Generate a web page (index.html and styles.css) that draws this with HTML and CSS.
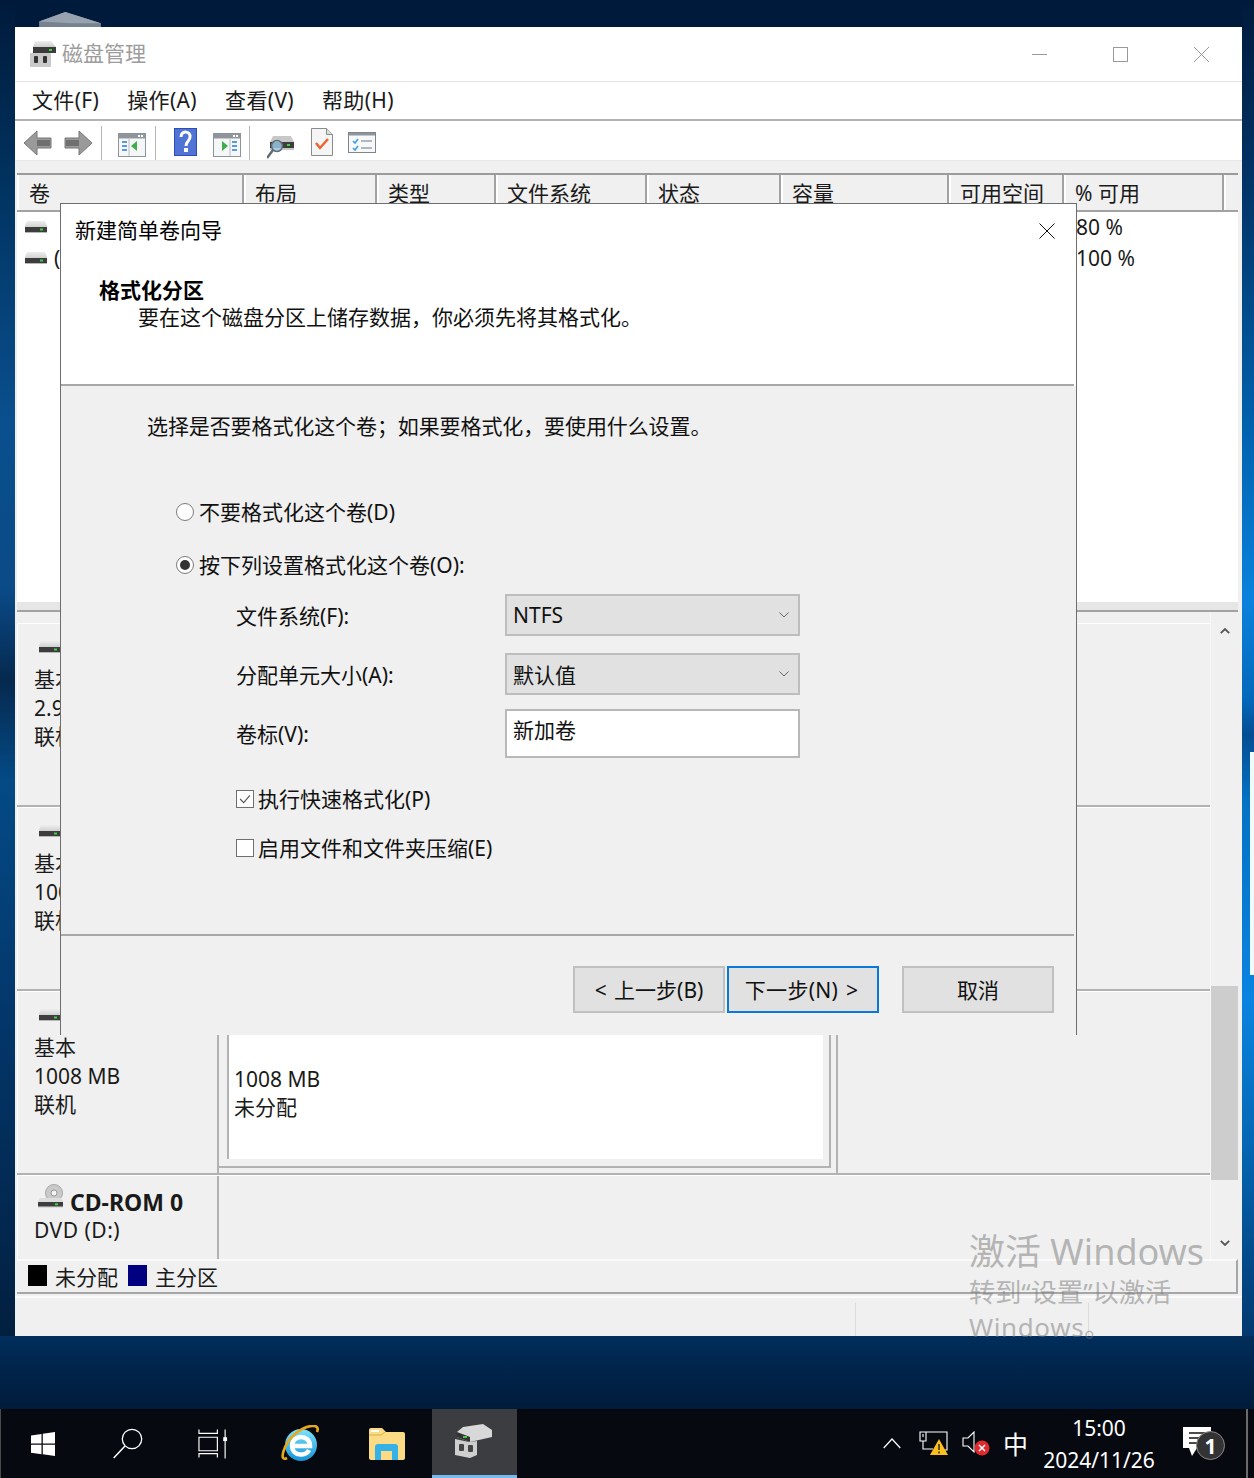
FILE: index.html
```html
<!DOCTYPE html>
<html lang="zh-CN">
<head>
<meta charset="utf-8">
<title>磁盘管理</title>
<link rel="stylesheet" href="styles.css">
</head>
<body>
<svg class="defs" width="0" height="0" aria-hidden="true">
  <defs>
    <linearGradient id="dtop" x1="0" y1="0" x2="0" y2="1"><stop offset="0" stop-color="#eeeeee"/><stop offset="1" stop-color="#b4b4b4"/></linearGradient>
    <linearGradient id="ieb" x1="0" y1="0" x2="0" y2="1"><stop offset="0" stop-color="#7fe3fb"/><stop offset="1" stop-color="#1594d8"/></linearGradient>
    <symbol id="disk" viewBox="0 0 24 14">
      <path d="M3 1h18l2 5v7H1V6z" fill="url(#dtop)"/>
      <rect x="1" y="7" width="22" height="5" fill="#3d3d3d"/>
      <rect x="16" y="8.5" width="3" height="2" fill="#3fd13f"/>
    </symbol>
    <symbol id="win-list" viewBox="0 0 28 24">
      <rect x=".5" y=".5" width="27" height="23" fill="#f4f6f8" stroke="#8d9499"/>
      <rect x="1" y="1" width="26" height="4" fill="#8f969b"/>
      <rect x="20" y="2" width="2" height="2" fill="#fff"/><rect x="23" y="2" width="2" height="2" fill="#fff"/>
      <rect x="1" y="5" width="26" height="1" fill="#c4cace"/>
    </symbol>
  </defs>
</svg>

<main class="desktop">
  <svg class="peek-icon" viewBox="0 0 66 16" aria-hidden="true"><path d="M0 10 28 0l38 12v4H0z" fill="#76828f"/><path d="M0 10 28 0l38 12-30 0z" fill="#98a3af"/></svg>
  <div class="peek-white"></div>

  <section class="window">
    <header class="titlebar">
      <svg class="app-icon" viewBox="0 0 28 28" aria-hidden="true">
        <path d="M6 1h16l5 6v5H4V7z" fill="url(#dtop)"/>
        <rect x="4" y="7" width="23" height="6" fill="#3b3b3b"/>
        <rect x="20" y="9" width="3" height="2" fill="#3fd13f"/>
        <rect x="1" y="13" width="21" height="14" rx="1" fill="#c9c9c9"/>
        <rect x="5" y="16" width="4" height="7" rx="1" fill="#333"/><rect x="14" y="16" width="4" height="7" rx="1" fill="#333"/>
      </svg>
      <span class="title-text">磁盘管理</span>
      <div class="win-controls">
        <svg class="ctl" viewBox="0 0 15 15" aria-hidden="true"><path d="M0 7.5h15" stroke="#999" fill="none"/></svg>
        <svg class="ctl" viewBox="0 0 15 15" aria-hidden="true"><rect x=".5" y=".5" width="14" height="14" stroke="#999" fill="none"/></svg>
        <svg class="ctl" viewBox="0 0 15 15" aria-hidden="true"><path d="M0 0l15 15M15 0 0 15" stroke="#999" fill="none"/></svg>
      </div>
    </header>

    <nav class="menubar">
      <span>文件(F)</span><span>操作(A)</span><span>查看(V)</span><span>帮助(H)</span>
    </nav>

    <div class="toolbar">
      <svg class="tb tb-arrow" viewBox="0 0 29 26" aria-hidden="true"><path d="M14 1 1 13l13 12v-7h14V8H14z" fill="#9a9a9a" stroke="#777"/><rect x="14" y="10" width="13" height="6" fill="#6f6f6f"/></svg>
      <svg class="tb tb-arrow gap12" viewBox="0 0 29 26" aria-hidden="true"><path d="M15 1l13 12-13 12v-7H1V8h14z" fill="#9a9a9a" stroke="#777"/><rect x="2" y="10" width="13" height="6" fill="#6f6f6f"/></svg>
      <i class="tb-sep sep-a"></i>
      <svg class="tb tb-win m-a" viewBox="0 0 28 24" aria-hidden="true"><use href="#win-list"/><path d="M4 9h5M4 13h5M4 17h5" stroke="#5b9bd5" stroke-width="2"/><path d="M19 8v10l-6-5z" fill="#3fae49"/><path d="M11 6v17" stroke="#b8bec2"/></svg>
      <i class="tb-sep sep-b"></i>
      <svg class="tb tb-help m-b" viewBox="0 0 23 28" aria-hidden="true"><rect width="23" height="28" fill="#2d4db5"/><rect x="1" y="1" width="21" height="26" fill="#4f74d6"/><path d="M7 9c0-7 10-6 9 0 0 4-4 4-4 9" fill="none" stroke="#fff" stroke-width="3"/><rect x="10" y="20" width="4" height="4" fill="#fff"/></svg>
      <svg class="tb tb-win m-c" viewBox="0 0 28 24" aria-hidden="true"><use href="#win-list"/><path d="M19 9h5M19 13h5M19 17h5" stroke="#5b9bd5" stroke-width="2"/><path d="M9 8v10l6-5z" fill="#3fae49"/><path d="M17 6v17" stroke="#b8bec2"/></svg>
      <i class="tb-sep sep-c"></i>
      <svg class="tb tb-scan m-d" viewBox="0 0 28 28" aria-hidden="true"><path d="M6 5h18l3 6v8H3v-8z" fill="#c8c8c8"/><rect x="3" y="11" width="24" height="6" fill="#3d3d3d"/><rect x="20" y="13" width="3" height="2" fill="#3fd13f"/><circle cx="10" cy="15" r="5.5" fill="#9fd0e8" fill-opacity=".8" stroke="#5f6b75" stroke-width="1.5"/><path d="M6 19 0 27" stroke="#5f6b75" stroke-width="2.5"/></svg>
      <svg class="tb tb-doc m-e" viewBox="0 0 22 28" aria-hidden="true"><path d="M.5.5h15l6 6v21H.5z" fill="#f5f5f5" stroke="#8a8a8a"/><path d="M15.5.5v6h6" fill="#ddd" stroke="#8a8a8a"/><path d="M5 15l4 5 8-9" fill="none" stroke="#f0602a" stroke-width="2.4"/></svg>
      <svg class="tb tb-chk m-f" viewBox="0 0 28 21" aria-hidden="true"><rect x=".5" y=".5" width="27" height="20" fill="#f7f8f9" stroke="#7f868b"/><rect x="1" y="1" width="26" height="2.5" fill="#8f969b"/><path d="M5 9l2 2 3-4M5 16l2 2 3-4" fill="none" stroke="#3f9fe0" stroke-width="1.6"/><path d="M13 9h11M13 16h11" stroke="#9aa0a5" stroke-width="1.4"/></svg>
    </div>

    <div class="workspace">
      <div class="volume-list">
        <div class="vl-grid vl-head">
          <span>卷</span><span>布局</span><span>类型</span><span>文件系统</span><span>状态</span><span>容量</span><span>可用空间</span><span>% 可用</span><span></span>
        </div>
        <div class="vl-body">
          <div class="vl-grid vl-row"><svg class="disk-s" aria-hidden="true"><use href="#disk"/></svg><b></b><b></b><b></b><b></b><b></b><b></b><span class="pct">80 %</span></div>
          <div class="vl-grid vl-row"><span class="vol-cell"><svg class="disk-s" aria-hidden="true"><use href="#disk"/></svg><em>(</em></span><b></b><b></b><b></b><b></b><b></b><b></b><span class="pct">100 %</span></div>
        </div>
      </div>

      <div class="disks">
        <div class="disk-rows">
          <div class="disk-row">
            <div class="disk-info"><svg class="disk-m" aria-hidden="true"><use href="#disk"/></svg><p>基本</p><p>2.9</p><p>联机</p></div>
            <div class="disk-map"></div>
          </div>
          <div class="disk-row">
            <div class="disk-info"><svg class="disk-m" aria-hidden="true"><use href="#disk"/></svg><p>基本</p><p>100</p><p>联机</p></div>
            <div class="disk-map"></div>
          </div>
          <div class="disk-row">
            <div class="disk-info"><svg class="disk-m" aria-hidden="true"><use href="#disk"/></svg><p>基本</p><p>1008 MB</p><p>联机</p></div>
            <div class="disk-map">
              <div class="part-outer"><div class="part-inner"><div class="part-white"><p>1008 MB</p><p>未分配</p></div></div></div>
            </div>
          </div>
          <div class="disk-row cd">
            <div class="disk-info">
              <div class="cd-head">
                <svg class="cd-icon" viewBox="0 0 27 26" aria-hidden="true"><circle cx="17" cy="9" r="8.5" fill="#c9c9c9" stroke="#a8a8a8"/><circle cx="17" cy="9" r="3" fill="#f4f4f4" stroke="#999"/><path d="M3 14h21l2 3v7H1v-7z" fill="#ddd"/><rect x="1" y="18" width="25" height="4.5" fill="#3d3d3d"/><rect x="18" y="19.3" width="3" height="2" fill="#3fd13f"/></svg>
                <strong>CD-ROM 0</strong>
              </div>
              <p>DVD (D:)</p>
            </div>
            <div class="disk-map"></div>
          </div>
        </div>
        <div class="scrollbar">
          <svg class="sb-arrow" viewBox="0 0 10 6" aria-hidden="true"><path d="M.8 5.2 5 1l4.2 4.2" fill="none" stroke="#555" stroke-width="1.8"/></svg>
          <div class="sb-thumb"></div>
          <svg class="sb-arrow down" viewBox="0 0 10 6" aria-hidden="true"><path d="M.8.8 5 5 9.200.8" fill="none" stroke="#555" stroke-width="1.8"/></svg>
        </div>
      </div>

      <div class="legend">
        <i class="swatch black"></i><span>未分配</span>
        <i class="swatch navy"></i><span>主分区</span>
      </div>
    </div>

    <footer class="statusbar"><i></i><i></i></footer>
  </section>

  <section class="dialog">
    <div class="dlg-head">
      <div class="dlg-title"><span>新建简单卷向导</span>
        <svg class="dlg-close" viewBox="0 0 16 16" aria-hidden="true"><path d="M.5.500l15 15M15.500.500l-15 15" stroke="#111" fill="none"/></svg>
      </div>
      <h1>格式化分区</h1>
      <p class="dlg-sub">要在这个磁盘分区上储存数据，你必须先将其格式化。</p>
    </div>
    <div class="dlg-body">
      <p class="intro">选择是否要格式化这个卷；如果要格式化，要使用什么设置。</p>
      <div class="opt opt-1"><i class="radio"></i><span>不要格式化这个卷(D)</span></div>
      <div class="opt opt-2"><i class="radio on"></i><span>按下列设置格式化这个卷(O):</span></div>
      <div class="field f1"><label>文件系统(F):</label><div class="combo"><span>NTFS</span><svg viewBox="0 0 10 6" aria-hidden="true"><path d="M.5.500 5 5 9.500.500" fill="none" stroke="#666"/></svg></div></div>
      <div class="field f2"><label>分配单元大小(A):</label><div class="combo"><span>默认值</span><svg viewBox="0 0 10 6" aria-hidden="true"><path d="M.5.500 5 5 9.500.500" fill="none" stroke="#666"/></svg></div></div>
      <div class="field f3"><label>卷标(V):</label><div class="textbox">新加卷</div></div>
      <div class="chk c1"><i class="box"><svg viewBox="0 0 18 18" aria-hidden="true"><path d="M3.500 9l4 4 7-8" fill="none" stroke="#555" stroke-width="1.300"/></svg></i><span>执行快速格式化(P)</span></div>
      <div class="chk c2"><i class="box"></i><span>启用文件和文件夹压缩(E)</span></div>
    </div>
    <div class="dlg-foot">
      <button class="btn">&lt; 上一步(B)</button>
      <button class="btn primary">下一步(N) &gt;</button>
      <button class="btn cancel">取消</button>
    </div>
  </section>

  <aside class="watermark">
    <p class="wm-1">激活 Windows</p>
    <p class="wm-2">转到“设置”以激活</p>
    <p class="wm-3">Windows。</p>
  </aside>

  <footer class="taskbar">
    <div class="tk"><svg class="ic-start" viewBox="0 0 24 24" aria-hidden="true"><path d="M0 3.400 10.500 2v9.500H0zM11.800 1.800 24 0v11.500H11.800zM0 12.800h10.500v9.400L0 20.800zM11.800 12.800H24V24l-12.200-1.700z" fill="#fff"/></svg></div>
    <div class="tk"><svg class="ic-search" viewBox="0 0 30 31" aria-hidden="true"><circle cx="19" cy="11" r="9.700" fill="none" stroke="#fff" stroke-width="1.300"/><path d="M12 18 .7 30" stroke="#fff" stroke-width="1.500"/></svg></div>
    <div class="tk"><svg class="ic-tv" viewBox="0 0 32 30" aria-hidden="true"><g fill="none" stroke="#fff" stroke-width="1.200"><path d="M1 0v4h19V0M1 8h19v14H1zM1 29v-4h19v4M28 0v30"/></g><rect x="26" y="8" width="4" height="4" fill="#fff"/></svg></div>
    <div class="tk"><svg class="ic-ie" viewBox="0 0 38 38" aria-hidden="true"><circle cx="20" cy="20" r="16" fill="url(#ieb)"/><path d="M11 21h18c0-12-18-12-18 0 0 10 14 11 17 4" fill="none" stroke="#fff" stroke-width="4.500"/><path d="M6 33C-3 38 3 18 14 9 26-1 40-2 36 7" fill="none" stroke="#e6a91e" stroke-width="2.600"/></svg></div>
    <div class="tk"><svg class="ic-folder" viewBox="0 0 37 32" aria-hidden="true"><path d="M1 2a2 2 0 0 1 2-2h11l4 4h17a2 2 0 0 1 2 2v24a2 2 0 0 1-2 2H3a2 2 0 0 1-2-2z" fill="#fbdc84"/><path d="M1 7h12l4-3" fill="none" stroke="#d9b04e"/><rect x="3" y="2" width="8" height="2" fill="#fff"/><path d="M7 32V19a3 3 0 0 1 3-3h17a3 3 0 0 1 3 3v13h-6v-9H13v9z" fill="#34b1e6"/></svg></div>
    <div class="tk active"><svg class="ic-dm" viewBox="0 0 38 34" aria-hidden="true"><path d="M9 3 29 0l9 6v7L16 18 3 13V8z" fill="#d8d8d8"/><path d="M3 8l13 5v5L3 13z" fill="#333"/><rect x="9" y="12" width="4" height="2" fill="#3fd13f"/><path d="M1 15l14 3 8-1v14l-7 3-15-3z" fill="#cfcfcf"/><rect x="5" y="20" width="5" height="7" rx="1" fill="#444"/><rect x="14" y="21" width="5" height="7" rx="1" fill="#444"/></svg></div>
    <div class="tray">
      <svg class="ic-chev" viewBox="0 0 18 11" aria-hidden="true"><path d="M.7 10 9 1l8.300 9" fill="none" stroke="#fff" stroke-width="1.200"/></svg>
      <svg class="ic-net" viewBox="0 0 29 25" aria-hidden="true"><g fill="none" stroke="#fff" stroke-width="1.100"><path d="M1 1h27v18H21M1 1h6v9H1zM4 10v8h10M4 3v3"/></g><path d="M20 8l9 16H11z" fill="#fcbf1e"/><path d="M20 13v6M20 20.500v2" stroke="#222" stroke-width="1.400"/></svg>
      <svg class="ic-vol" viewBox="0 0 28 25" aria-hidden="true"><path d="M1 7h5l6-6v20l-6-6H1z" fill="none" stroke="#fff" stroke-width="1.100"/><circle cx="20" cy="17" r="7.500" fill="#dc2a2f"/><path d="M17 14l6 6M23 14l-6 6" stroke="#fff" stroke-width="1.500"/></svg>
      <span class="ime">中</span>
      <div class="clock"><span>15:00</span><span>2024/11/26</span></div>
      <div class="notif">
        <svg viewBox="0 0 29 29" aria-hidden="true"><path d="M0 0h28v21H14l-5 8-3-8H0z" fill="#fff"/><path d="M6 6h16M6 11h16M6 16h16" stroke="#111" stroke-width="1.500"/></svg>
        <span class="badge">1</span>
      </div>
      <i class="show-desktop"></i>
    </div>
  </footer>
</main>
</body>
</html>
```
FILE: styles.css
```css
* { box-sizing: border-box; }
html, body { margin: 0; padding: 0; }
body {
  width: 1254px;
  height: 1478px;
  overflow: hidden;
  font-family: "Noto Sans", "Noto Sans CJK SC", sans-serif;
  font-size: 21px;
  color: #1a1a1a;
}
p, h1 { margin: 0; }
i, em { font-style: normal; }
.defs { position: absolute; }

.desktop {
  position: relative;
  width: 1254px;
  height: 1478px;
  background:
    linear-gradient(180deg, #001a3b 0, #013563 200px, #0a4f8e 420px, #0a4a87 590px, #06294f 680px, #044a85 780px, #03386c 1000px, #021f40 1336px) left top / 15px 1336px no-repeat,
    linear-gradient(180deg, #001a3b 0, #013a70 220px, #0060ac 420px, #0a82dd 600px, #0468ba 700px, #054d92 735px, #0472c4 800px, #0a84e0 1000px, #0465b2 1150px, #02386e 1336px) right top / 12px 1336px no-repeat,
    linear-gradient(180deg, #001a3b 0, #001a3b 27px, #012e5c 1336px, #01234a 1372px, #001b3b 1409px);
}
.peek-icon { position: absolute; left: 37px; top: 12px; width: 66px; height: 15px; }
.peek-white { position: absolute; left: 1250px; top: 752px; width: 4px; height: 223px; background: #eefcff; }

/* main window */
.window {
  position: absolute;
  left: 15px;
  top: 27px;
  width: 1227px;
  height: 1309px;
  background: #f0f0f0;
  display: flex;
  flex-direction: column;
}
.titlebar {
  height: 55px;
  flex: none;
  background: #fff;
  border-bottom: 1px solid #e3e3e3;
  display: flex;
  align-items: center;
  padding-left: 15px;
}
.app-icon { width: 28px; height: 28px; margin-left: -1px; }
.title-text { margin-left: 5px; color: #9c9c9c; padding-bottom: 4px; }
.win-controls { margin-left: auto; display: flex; gap: 66px; padding-right: 33px; }
.ctl { width: 15px; height: 15px; display: block; }

.menubar {
  height: 39px;
  flex: none;
  background: #fff;
  border-bottom: 2px solid #b4b4b4;
  display: flex;
  gap: 28px;
  align-items: center;
  padding: 0 0 3px 17px;
  letter-spacing: .35px;
}
.toolbar {
  height: 40px;
  flex: none;
  background: #fff;
  display: flex;
  align-items: center;
  padding: 4px 0 0 8px;
  border-bottom: 1px solid #e9e9e9;
}
.tb { display: block; flex: none; }
.tb-arrow { width: 29px; height: 26px; }
.gap12 { margin-left: 12px; }
.tb-sep { width: 1px; height: 34px; background: #b5b5b5; flex: none; }
.sep-a { margin-left: 8px; }
.sep-b { margin-left: 9px; }
.sep-c { margin-left: 8px; }
.tb-win { width: 28px; height: 24px; margin-top: 4px; }
.m-a { margin-left: 16px; }
.tb-help { width: 23px; height: 28px; margin-left: 18px; margin-top: -2px; }
.m-c { margin-left: 16px; }
.tb-scan { width: 28px; height: 28px; margin-left: 17px; margin-top: 4px; }
.tb-doc { width: 22px; height: 28px; margin-left: 16px; margin-top: -2px; }
.tb-chk { width: 28px; height: 21px; margin-left: 15px; }

.workspace {
  flex: none;
  height: 1135px;
  display: flex;
  flex-direction: column;
  padding: 12px 4px 0 2px;
}
.volume-list {
  height: 439px;
  flex: none;
  border-top: 2px solid #9b9b9b;
  background: #fff;
  display: flex;
  flex-direction: column;
  border-bottom: 2px solid #a2a2a2;
}
.vl-grid {
  display: grid;
  grid-template-columns: 227px 133px 119px 151px 134px 168px 115px 160px 1fr;
}
.vl-head {
  height: 37px;
  flex: none;
  background: #f0f0f0;
  border-bottom: 2px solid #a2a2a2;
}
.vl-head span {
  padding-left: 9px;
  line-height: 36px;
  border-right: 2px solid #a2a2a2;
  border-left: 2px solid #fff;
  height: 35px;
  white-space: nowrap;
  overflow: hidden;
}
.vl-head span:first-child { padding-left: 10px; }
.vl-head span:last-child { border-right: 0; }
.vl-body { flex: 1; border-bottom: 8px solid #e6e6e6; }
.vl-row { height: 31px; align-items: center; }
.vl-row:first-child { height: 30px; }
.vl-row b { display: block; }
.disk-s { width: 24px; height: 14px; margin-left: 7px; display: block; }
.vol-cell { display: flex; align-items: center; }
.vol-cell em { margin-left: 6px; }
.pct { padding-left: 12px; }

.disks {
  height: 647px;
  flex: none;
  display: flex;
}
.disk-rows { flex: 1; min-width: 0; padding-top: 11px; }
.disk-row {
  height: 184px;
  display: flex;
  border-bottom: 2px solid #b2b2b2;
  border-top: 1px solid #fff;
}
.disk-row.cd { height: 84px; border-bottom: 0; }
.disk-info {
  width: 200px;
  flex: none;
  padding: 16px 0 0 16px;
  line-height: 28.500px;
  border-left: 1px solid #fff;
}
.disk-info p { white-space: nowrap; }
.disk-m { width: 24px; height: 14px; display: block; margin: 0 0 11px 4px; }
.disk-map {
  flex: 1;
  min-width: 0;
  border-left: 2px solid #b2b2b2;
  position: relative;
  padding-top: 7px;
}
.part-outer {
  width: 619px;
  height: 176px;
  border-right: 2px solid #b2b2b2;
  border-bottom: 2px solid #b2b2b2;
  padding: 0 5px 5px 0;
}
.part-inner {
  height: 100%;
  border-right: 2px solid #b2b2b2;
  border-bottom: 2px solid #b2b2b2;
  padding: 0 6px 7px 8px;
}
.part-white {
  height: 100%;
  background: #fff;
  border-left: 2px solid #b2b2b2;
  padding: 66px 0 0 5px;
  line-height: 28px;
}
.cd-head { display: flex; align-items: center; margin: -11px 0 0 3px; }
.cd-icon { width: 27px; height: 26px; margin: -6px 6px 0 0; }
.cd-head strong { font-size: 23px; font-weight: 700; line-height: 34px; margin-top: 4px; white-space: nowrap; }
.cd .disk-info p { margin-top: -3px; letter-spacing: .5px; }

.scrollbar {
  width: 28px;
  flex: none;
  display: flex;
  flex-direction: column;
  align-items: center;
  background: #f0f0f0;
  border-left: 1px solid #f7f7f7;
}
.sb-arrow { width: 10px; height: 6px; margin-top: 16px; flex: none; }
.sb-thumb { width: 100%; height: 194px; background: #cdcdcd; margin-top: 352px; flex: none; }
.sb-arrow.down { margin-top: 60px; }

.legend {
  height: 35px;
  margin-bottom: 2px;
  flex: none;
  border-top: 2px solid #fafafa;
  border-bottom: 2px solid #a6a6a6;
  border-right: 2px solid #a6a6a6;
  display: flex;
  align-items: center;
  padding-left: 11px;
}
.swatch { width: 19px; height: 21px; display: block; margin-bottom: 2px; }
.black { background: #000; }
.navy { background: #000080; margin-left: 10px; }
.legend span { margin-left: 8px; padding-bottom: 2px; }

.statusbar {
  flex: none;
  height: 40px;
  display: flex;
  padding: 5px 0 0 840px;
  gap: 232px;
  border-top: 2px solid #fafafa;
}
.statusbar i { width: 1px; background: #dcdcdc; height: 100%; display: block; }

/* dialog */
.dialog {
  position: absolute;
  left: 60px;
  top: 203px;
  width: 1017px;
  height: 832px;
  background: #f0f0f0;
  border: 1px solid #6e6e6e;
  border-bottom: 0;
  display: flex;
  flex-direction: column;
  color: #111;
}
.dlg-head {
  height: 182px;
  background: #fff;
  flex: none;
  border-bottom: 2px solid #a8a8a8;
  margin-right: 2px;
  box-shadow: 2px 0 0 #fff;
}
.dlg-title {
  display: flex;
  align-items: center;
  justify-content: space-between;
  padding: 8px 19px 0 14px;
  height: 42px;
  color: #000;
}
.dlg-close { width: 16px; height: 16px; margin-top: 4px; }
.dlg-head h1 { font-size: 21px; font-weight: 700; line-height: 30px; margin: 29px 0 0 38px; color: #000; }
.dlg-sub { line-height: 30px; margin: -3px 0 0 77px; }
.dlg-body { flex: 1; padding-top: 25px; min-height: 0; }
.intro { line-height: 30px; margin-left: 86px; letter-spacing: -.1px; }
.opt { display: flex; align-items: center; height: 30px; margin-left: 115px; gap: 5px; }
.opt span { padding-bottom: 2px; }
.opt-1 { margin-top: 56px; }
.opt-2 { margin-top: 23px; }
.radio {
  width: 18px; height: 18px;
  border-radius: 50%;
  border: 1px solid #7b7b7b;
  background: #fff;
  display: grid;
  place-items: center;
  flex: none;
}
.radio.on::after { content: ""; width: 10px; height: 10px; border-radius: 50%; background: #333; }
.field { display: flex; align-items: center; margin-left: 175px; }
.field label { width: 269px; flex: none; padding-bottom: 1px; }
.f1 { margin-top: 14px; }
.f2 { margin-top: 17px; }
.f3 { margin-top: 14px; }
.combo {
  width: 295px;
  height: 42px;
  background: #e1e1e1;
  border: 2px solid #bdbdbd;
  display: flex;
  align-items: center;
  justify-content: space-between;
  padding: 0 9px 0 6px;
}
.combo svg { width: 10px; height: 6px; }
.textbox {
  width: 295px;
  height: 49px;
  background: #fff;
  border: 2px solid #b8b8b8;
  padding: 0 6px;
  line-height: 38px;
}
.chk { display: flex; align-items: center; height: 30px; margin-left: 175px; gap: 4px; }
.chk span { padding-bottom: 2px; }
.c1 { margin-top: 26px; }
.c2 { margin-top: 19px; }
.box { width: 18px; height: 18px; background: #fff; border: 1px solid #6f6f6f; display: block; flex: none; }
.box svg { display: block; width: 16px; height: 16px; }
.dlg-foot {
  height: 101px;
  flex: none;
  border-top: 2px solid #a8a8a8;
  padding: 30px 20px 0 0;
  margin-right: 2px;
  display: flex;
  justify-content: flex-end;
  align-items: flex-start;
  gap: 2px;
}
.btn {
  width: 152px;
  height: 47px;
  font: inherit;
  word-spacing: 2px;
  color: #111;
  background: #e1e1e1;
  border: 2px solid #c0c0c0;
  padding: 0 0 2px;
}
.btn.primary { border-color: #0a78d7; letter-spacing: .3px; padding-right: 3px; }
.btn.cancel { margin-left: 21px; }

/* watermark */
.watermark { position: absolute; left: 969px; top: 1227px; color: rgba(120,120,120,.52); }
.wm-1 { font-size: 36px; line-height: 50px; white-space: nowrap; }
.wm-2 { font-size: 26.200px; line-height: 36px; margin-top: -3px; white-space: nowrap; }
.wm-3 { font-size: 26px; line-height: 35px; letter-spacing: .6px; white-space: nowrap; }

/* taskbar */
.taskbar {
  position: absolute;
  left: 0;
  top: 1409px;
  width: 1254px;
  height: 69px;
  background: #06090f;
  display: flex;
  border-left: 1px solid #4a4a4a;
  color: #fff;
}
.tk { width: 86px; flex: none; display: grid; place-items: center; }
.tk svg { display: block; }
.tk.active { background: #3b3d40; border-bottom: 3px solid #76b9ed; margin-left: 1px; width: 85px; }
.ic-start { width: 24px; height: 24px; margin-right: 3px; margin-top: 1px; }
.ic-search { width: 30px; height: 31px; margin-right: 4px; }
.ic-tv { width: 31px; height: 30px; margin-left: -6px; }
.ic-ie { width: 38px; height: 38px; margin-right: 4px; }
.ic-folder { width: 37px; height: 32px; margin-right: 4px; }
.ic-dm { width: 38px; height: 34px; margin: -2px 4px 0 0; }
.tray { flex: 1; position: relative; display: flex; align-items: center; padding-left: 366px; }
.ic-chev { width: 18px; height: 11px; flex: none; }
.ic-net { width: 29px; height: 25px; margin-left: 18px; flex: none; }
.ic-vol { width: 28px; height: 25px; margin-left: 14px; flex: none; }
.ime { font-size: 25px; margin-left: 13px; flex: none; line-height: 30px; }
.clock {
  width: 130px;
  margin-left: 6px;
  flex: none;
  display: flex;
  flex-direction: column;
  align-items: center;
  line-height: 32px;
  font-size: 21px;
  white-space: nowrap;
}
.notif { position: relative; width: 44px; height: 34px; margin-left: 19px; flex: none; }
.notif svg { position: absolute; left: 0; top: 0; width: 29px; height: 29px; }
.badge {
  position: absolute;
  left: 13px;
  top: 4px;
  width: 29px;
  height: 29px;
  border-radius: 50%;
  background: #333;
  border: 1px solid #8a8a8a;
  display: grid;
  place-items: center;
  font-size: 21px;
  font-weight: 700;
}
.show-desktop { position: absolute; right: 6px; top: 0; width: 2px; height: 69px; background: #6a6a6a; }
```
